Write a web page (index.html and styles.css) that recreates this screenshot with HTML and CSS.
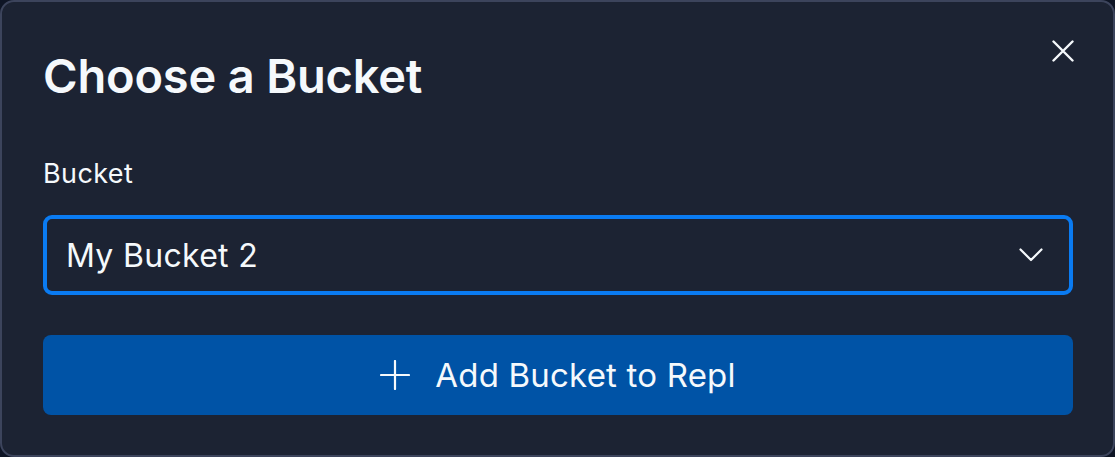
FILE: index.html
```html
<!DOCTYPE html>
<html>
<head>
    <title>Choose a Bucket</title>
    <meta name="viewport" content="width=device-width, initial-scale=1.0">
    <link rel="stylesheet" href="styles.css">
</head>
<body>
    <div class="modal">
        <div class="modal__header">
            <h1 class="modal__title">Choose a Bucket</h1>
            <button class="modal__close" aria-label="Close">
                <svg width="22" height="22" viewBox="0 0 22 22">
                    <path d="M1.5 1.5 L20.5 20.5 M20.5 1.5 L1.5 20.5" stroke="#f5f9fc" stroke-width="2.4" stroke-linecap="round" fill="none"/>
                </svg>
            </button>
        </div>

        <label class="field__label" for="bucket">Bucket</label>
        <div class="select" id="bucket">
            <span class="select__value">My Bucket 2</span>
            <svg class="select__chevron" width="24" height="14" viewBox="0 0 24 14">
                <path d="M1.5 1.5 L12 12 L22.5 1.5" stroke="#f5f9fc" stroke-width="2.2" stroke-linecap="round" stroke-linejoin="round" fill="none"/>
            </svg>
        </div>

        <button class="btn-add">
            <svg width="30" height="30" viewBox="0 0 30 30">
                <path d="M15 1 V29 M1 15 H29" stroke="#f5f9fc" stroke-width="2.2" stroke-linecap="round" fill="none"/>
            </svg>
            <span>Add Bucket to Repl</span>
        </button>
    </div>
</body>
</html>
```

FILE: styles.css
```css
body {
    margin: 0;
    background-color: #0e1525;
    font-family: Inter, "Noto Sans", sans-serif;
    color: #f5f9fc;
}

.modal {
    box-sizing: border-box;
    width: 1115px;
    height: 457px;
    background-color: #1c2333;
    border: 2px solid #3c445c;
    border-radius: 14px;
    padding: 0 40px 0 41px;
    display: flex;
    flex-direction: column;
}

.modal__header {
    display: flex;
    justify-content: space-between;
    align-items: flex-start;
    padding-top: 33px;
}

.modal__title {
    margin: 13px 0 0 0;
    font-size: 47px;
    line-height: 56px;
    font-weight: 600;
    letter-spacing: -0.2px;
}

.modal__close {
    width: 32px;
    height: 32px;
    margin-right: -6px;
    padding: 0;
    border: none;
    background: none;
    display: flex;
    align-items: center;
    justify-content: center;
    cursor: pointer;
}

.field__label {
    display: block;
    margin-top: 54px;
    font-size: 27px;
    line-height: 32px;
    letter-spacing: 0.4px;
}

.select {
    box-sizing: border-box;
    height: 80px;
    margin-top: 25px;
    border: 4px solid #0a7bf2;
    border-radius: 9px;
    padding: 0 26px 0 19px;
    display: flex;
    align-items: center;
    justify-content: space-between;
}

.select__value {
    font-size: 32px;
    letter-spacing: 0.3px;
}

.btn-add {
    height: 80px;
    margin-top: 40px;
    border: none;
    border-radius: 8px;
    background-color: #0053a6;
    color: #f5f9fc;
    font-family: inherit;
    font-size: 33px;
    letter-spacing: 0.2px;
    display: flex;
    align-items: center;
    justify-content: center;
    gap: 25px;
    cursor: pointer;
}
```
